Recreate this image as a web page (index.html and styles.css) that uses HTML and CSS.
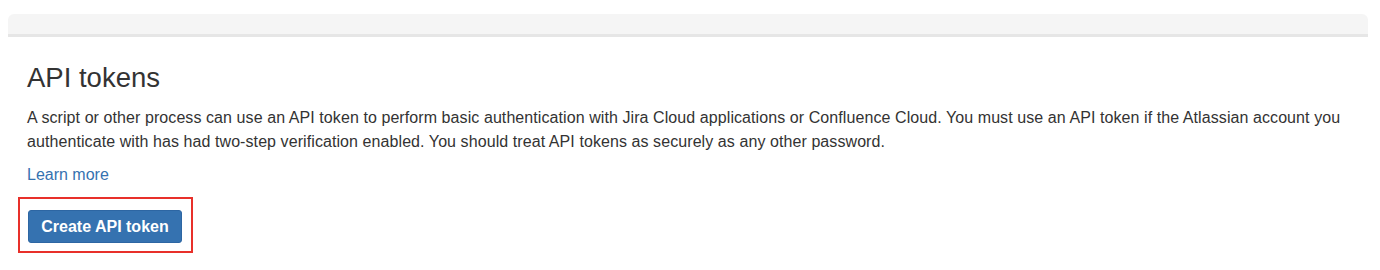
FILE: index.html
```html
<!DOCTYPE html>
<html lang="en">
<head>
    <meta charset="UTF-8">
    <title>API tokens</title>
    <link rel="stylesheet" href="styles.css">
</head>
<body>

    <div class="tabs-bar"></div>

    <section class="tokens">
        <h1>API tokens</h1>
        <p>A script or other process can use an API token to perform basic authentication with Jira Cloud applications or Confluence Cloud. You must use an API token if the Atlassian account you authenticate with has had two-step verification enabled. You should treat API tokens as securely as any other password.</p>
        <a class="learn-more" href="#">Learn more</a>
        <div class="highlight">
            <button class="primary">Create API token</button>
        </div>
    </section>

</body>
</html>
```

FILE: styles.css
```css
:root {
    --text-color: #333333;
    --link-color: #3572b0;
    --primary-color: #3572b0;
    --font-main: 'Liberation Sans', Arial, sans-serif;
}

body {
    margin: 0;
    background: #ffffff;
    font-family: var(--font-main);
    color: var(--text-color);
}

/* Grey strip at the top */
.tabs-bar {
    margin: 14px 12px 0 8px;
    height: 20px;
    background-color: #f5f5f5;
    border-radius: 6px 6px 0 0;
    border-bottom: 3px solid #e6e6e6;
}

/* Main section */
.tokens {
    padding: 25px 20px 0 27px;
}

h1 {
    font-size: 27.5px;
    font-weight: 400;
    margin: 0 0 12px;
    color: #333;
}

p {
    font-size: 16px;
    line-height: 24px;
    letter-spacing: 0.08px;
    margin: 0 0 9px;
}

.learn-more {
    display: block;
    width: max-content;
    font-size: 16px;
    line-height: 24px;
    color: var(--link-color);
    text-decoration: none;
}

.highlight {
    display: inline-block;
    margin: 10px 0 0 -9px;
    padding: 11px 9px 8px 8px;
    border: 2px solid #e8302a;
    line-height: 0;
}

button.primary {
    width: 154px;
    height: 33px;
    font-family: var(--font-main);
    font-size: 16px;
    font-weight: 700;
    color: #ffffff;
    background-color: var(--primary-color);
    border: 1px solid #2d66a3;
    border-radius: 3px;
    cursor: pointer;
}
```
